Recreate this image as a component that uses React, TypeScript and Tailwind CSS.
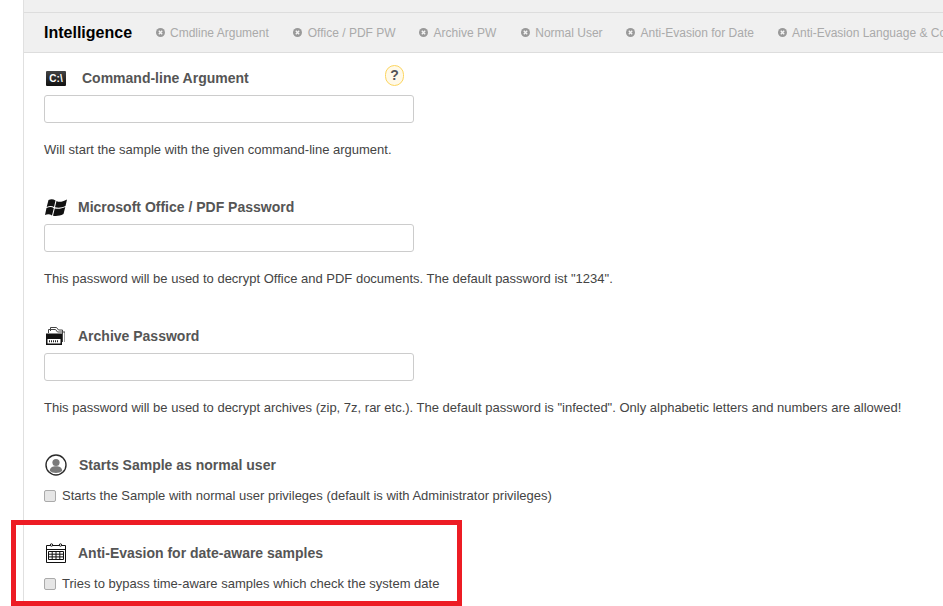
import React from 'react';

const tabs = [
  { label: 'Cmdline Argument', cls: 'ml-[24px] gap-[5px]' },
  { label: 'Office / PDF PW', cls: 'ml-[24px] gap-[6px]' },
  { label: 'Archive PW', cls: 'ml-[23px] gap-[6px]' },
  { label: 'Normal User', cls: 'ml-[25px] gap-[5px]' },
  { label: 'Anti-Evasion for Date', cls: 'ml-[23px] gap-[6px]' },
  { label: 'Anti-Evasion Language & Country', cls: 'ml-[24px] gap-[5px]' },
];

const CloseDot = () => (
  <svg width="9" height="9" viewBox="0 0 9 9" className="shrink-0">
    <circle cx="4.5" cy="4.5" r="4.5" fill="#999999" />
    <path d="M2.8 2.8l3.4 3.4M6.2 2.8l-3.4 3.4" stroke="#f4f4f4" strokeWidth="1.4" />
  </svg>
);

const CmdIcon = () => (
  <div className="ml-[2px] flex h-[15px] w-[20px] items-center justify-center rounded-[1px] bg-gradient-to-b from-[#444444] to-[#111111] text-[10px] font-bold text-white">
    C:\
  </div>
);

const WindowsIcon = () => (
  <svg width="22" height="17" viewBox="0 0 22 17" className="ml-[1px]">
    <path
      fill="#111111"
      d="M3.5 1C6 0 8 0 10.5 1.5L9 8C7 6.8 4.5 6.8 1.7 8ZM11.5 2C14 3.4 17 3.2 22 .5L20.5 7C17 8.8 13.5 9 10 8.3ZM1.5 9C4.5 7.8 7 7.8 8.8 9.2L7 16.5C5 15 2.5 15 0 16ZM9.8 9.5C13 10 17 9.8 20.3 8L18.5 15C15 17 11.5 17.2 8 16.8Z"
    />
  </svg>
);

const ArchiveIcon = () => (
  <svg width="19" height="18" viewBox="0 0 19 18" className="ml-[2px]">
    <path d="M4.5 4V.5h6l2 2.5h4v12" fill="none" stroke="#444444" strokeWidth="1" />
    <path d="M2.5 6V2.5h7l2 2.5h7.5v10" fill="none" stroke="#444444" strokeWidth="1" />
    <path d="M0 6.5h16V18H0z" fill="#111111" />
    <path d="M1.5 12h13v4.5h-13z" fill="#ffffff" />
    <path d="M3 14.2h10" stroke="#222222" strokeWidth="2" strokeDasharray="1 1" />
  </svg>
);

const UserIcon = () => (
  <svg width="22" height="22" viewBox="0 0 22 22" className="ml-[1px]">
    <circle cx="11" cy="11" r="10" fill="#ffffff" stroke="#2b2b2b" strokeWidth="1.4" />
    <circle cx="11" cy="8.5" r="3.6" fill="#7a7a7a" />
    <path d="M4.8 17c0-3.6 2.8-4.8 6.2-4.8s6.2 1.2 6.2 4.8c-1.6 1.3-3.8 2-6.2 2s-4.6-.7-6.2-2z" fill="#7a7a7a" />
  </svg>
);

const CalendarIcon = () => (
  <svg width="20" height="20" viewBox="0 0 20 20" fill="none" stroke="#111111" strokeWidth="1" className="ml-[2px]">
    <path d="M.5 2.5h19v17H.5z" />
    <path d="M.5 6.5h19" />
    <circle cx="5.5" cy="2" r="1.2" fill="#ffffff" />
    <circle cx="14.5" cy="2" r="1.2" fill="#ffffff" />
    <path d="M2.5 8.5h15v8h-15zM2.5 11.2h15M2.5 13.9h15M6.2 8.5v8M10 8.5v8M13.8 8.5v8" />
  </svg>
);

const Heading = ({ icon, title, gap }: { icon: React.ReactNode; title: string; gap: string }) => (
  <div className="flex h-[26px] items-center">
    <div className="flex w-[24px] shrink-0 items-center">{icon}</div>
    <h3 className={`${gap} text-[14px] font-bold text-[#555555]`}>{title}</h3>
  </div>
);

const TextSection = ({
  icon,
  title,
  gap,
  help,
  text,
}: {
  icon: React.ReactNode;
  title: string;
  gap: string;
  help?: boolean;
  text: string;
}) => (
  <section className="relative h-[129px]">
    <Heading icon={icon} title={title} gap={gap} />
    {help && (
      <div className="absolute left-[341px] top-0 flex h-[21px] w-[19px] items-center justify-center rounded-full border border-[#fcd55f] bg-[#fff9e8] text-[14px] font-bold text-[#555555]">
        ?
      </div>
    )}
    <input
      type="text"
      className="mt-[4px] block h-[28px] w-[370px] rounded-[3px] border border-[#cccccc] bg-white"
    />
    <p className="mt-[17px] text-[13px] leading-[20px] text-[#444444]">{text}</p>
  </section>
);

const CheckSection = ({
  icon,
  title,
  gap,
  text,
}: {
  icon: React.ReactNode;
  title: string;
  gap: string;
  text: string;
}) => (
  <section className="h-[88px]">
    <Heading icon={icon} title={title} gap={gap} />
    <label className="mt-[8px] flex h-[20px] items-center gap-[6px] text-[13px] text-[#444444]">
      <span className="h-[12px] w-[12px] rounded-[2px] border border-[#aaaaaa] bg-[#e6e6e6]" />
      {text}
    </label>
  </section>
);

export default function App() {
  return (
    <div className="relative flex h-[606px] w-[943px] overflow-hidden bg-white font-['Liberation_Sans',Arial,sans-serif]">
      <div className="w-[23px] shrink-0" />
      <main className="min-w-0 flex-1 border-l border-[#e0e0e0]">
        <div className="h-[13px] border-b border-[#dddddd] bg-[#f0f0f0]" />
        <nav className="flex h-[40px] items-center overflow-hidden whitespace-nowrap border-b border-[#dddddd] bg-[#f0f0f0] pl-[20px]">
          <span className="text-[16px] font-bold text-black">Intelligence</span>
          {tabs.map((tab) => (
            <span key={tab.label} className={`${tab.cls} flex items-center text-[12px] text-[#aaaaaa]`}>
              <CloseDot />
              {tab.label}
            </span>
          ))}
        </nav>
        <div className="pl-[20px] pt-[12px]">
          <TextSection
            icon={<CmdIcon />}
            title="Command-line Argument"
            gap="ml-[14px]"
            help
            text="Will start the sample with the given command-line argument."
          />
          <TextSection
            icon={<WindowsIcon />}
            title="Microsoft Office / PDF Password"
            gap="ml-[10px]"
            text={'This password will be used to decrypt Office and PDF documents. The default password ist "1234".'}
          />
          <TextSection
            icon={<ArchiveIcon />}
            title="Archive Password"
            gap="ml-[10px]"
            text={'This password will be used to decrypt archives (zip, 7z, rar etc.). The default password is "infected". Only alphabetic letters and numbers are allowed!'}
          />
          <CheckSection
            icon={<UserIcon />}
            title="Starts Sample as normal user"
            gap="ml-[11px]"
            text="Starts the Sample with normal user privileges (default is with Administrator privileges)"
          />
          <CheckSection
            icon={<CalendarIcon />}
            title="Anti-Evasion for date-aware samples"
            gap="ml-[10px]"
            text="Tries to bypass time-aware samples which check the system date"
          />
        </div>
      </main>
      <div className="pointer-events-none absolute left-[11px] top-[520px] h-[86px] w-[451px] border-[5px] border-[#ed1c24]" />
    </div>
  );
}
